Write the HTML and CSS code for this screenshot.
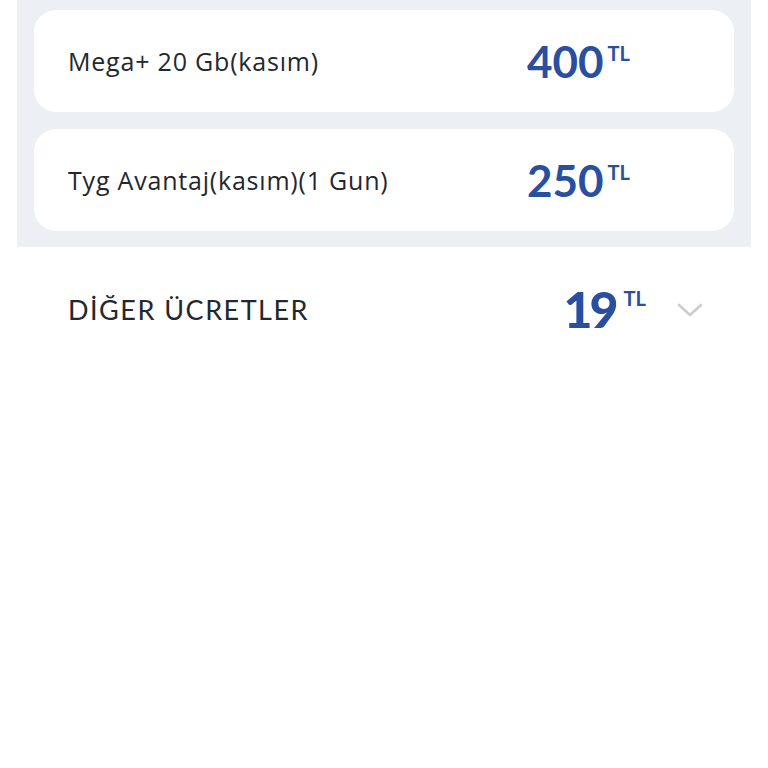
FILE: index.html
```html
<!DOCTYPE html>
<html lang="tr">
<head>
    <meta charset="UTF-8">
    <meta name="viewport" content="width=device-width, initial-scale=1.0">
    <title>Fatura Detayı</title>
    <link rel="stylesheet" href="styles.css">
</head>
<body>
    <div class="panel">
        <div class="card">
            <span class="card-title">Mega+ 20 Gb(kasım)</span>
            <span class="price">400<span class="currency">TL</span></span>
        </div>
        <div class="card">
            <span class="card-title">Tyg Avantaj(kasım)(1 Gun)</span>
            <span class="price">250<span class="currency">TL</span></span>
        </div>
    </div>

    <div class="other-row">
        <span class="other-title">DİĞER ÜCRETLER</span>
        <div class="other-right">
            <span class="price price-large">19<span class="currency">TL</span></span>
            <svg class="chevron" width="26" height="14" viewBox="0 0 26 14">
                <polyline points="2,2 13,12 24,2" fill="none" stroke="#cdcdcd" stroke-width="2.6" stroke-linecap="round" stroke-linejoin="round"/>
            </svg>
        </div>
    </div>
</body>
</html>
```

FILE: styles.css
```css
* {
    box-sizing: border-box;
    margin: 0;
    padding: 0;
    font-family: "Lato", "Open Sans", sans-serif;
}

body {
    background: white;
    width: 768px;
    min-height: 768px;
}

.panel {
    margin: 0 17px;
    background: #eceff3;
    padding: 10px 17px 16px;
    display: flex;
    flex-direction: column;
    gap: 17px;
}

.card {
    height: 102px;
    background: white;
    border-radius: 22px;
    display: flex;
    align-items: center;
    justify-content: space-between;
    padding: 0 104px 0 34px;
}

.card-title {
    font-family: "Open Sans", sans-serif;
    font-size: 25px;
    letter-spacing: 0.8px;
    color: #24272e;
}

.price {
    display: flex;
    align-items: flex-start;
    font-size: 44px;
    font-weight: 700;
    color: #2a4f9f;
    line-height: 1;
}

.currency {
    font-size: 20px;
    margin-left: 4px;
    margin-top: 4px;
}

.other-row {
    height: 124px;
    display: flex;
    align-items: center;
    justify-content: space-between;
    padding: 0 65px 0 68px;
}

.other-title {
    font-size: 27px;
    letter-spacing: 1.5px;
    color: #24272e;
}

.other-right {
    display: flex;
    align-items: center;
    gap: 31px;
}

.price-large {
    font-size: 50px;
    font-weight: 900;
    letter-spacing: -3px;
}

.price-large .currency {
    font-weight: 700;
    letter-spacing: 0;
    margin-left: 8px;
}

.chevron {
    margin-top: 2px;
}
```
